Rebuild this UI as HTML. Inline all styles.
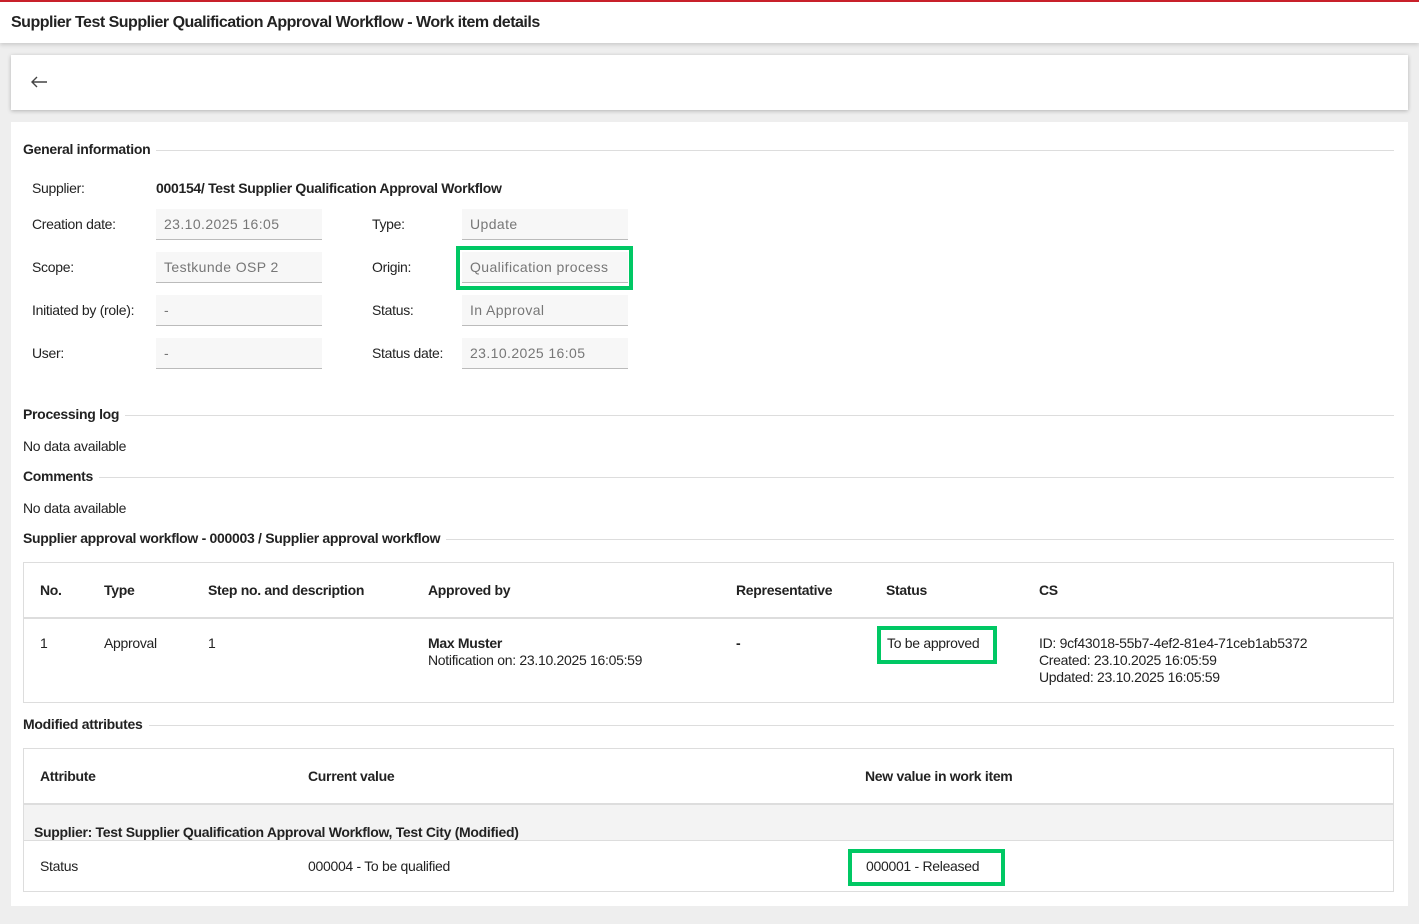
<!DOCTYPE html>
<html><head><meta charset="utf-8"><style>
*{margin:0;padding:0;box-sizing:border-box}
body{width:1419px;height:924px;background:#eeeeee;font-family:"Liberation Sans",sans-serif;font-size:14px;color:#222;position:relative;overflow:hidden;letter-spacing:-0.3px}
.a{position:absolute;white-space:nowrap}
.b{font-weight:bold}
.hdr{position:absolute;left:0;top:0;width:1419px;height:43px;background:#fff;border-top:2px solid #c8202a;box-shadow:0 2px 4px rgba(0,0,0,.15)}
.card{position:absolute;left:11px;top:55px;width:1397px;height:55px;background:#fff;box-shadow:0 1px 4px rgba(0,0,0,.25)}
.panel{position:absolute;left:11px;top:122px;width:1397px;height:784px;background:#fff}
.sec{position:absolute;left:23px;height:1px;background:#ddd;width:1371px}
.sec span{position:absolute;left:0;top:-9px;background:#fff;padding-right:6px;font-weight:bold;font-size:14px}
.inp{position:absolute;width:166px;height:31px;background:#f7f7f7;border-bottom:1px solid #bbb;color:#777;padding:7px 8px;font-size:14px;letter-spacing:0.4px}
.tbl{position:absolute;left:23px;width:1371px;border:1px solid #ddd;background:#fff}
.grn{position:absolute;border:4px solid #00c864}
</style></head><body>
<div class="hdr"><div class="a b" style="left:11px;top:12px;font-size:16px;letter-spacing:-0.5px">Supplier Test Supplier Qualification Approval Workflow - Work item details</div></div>
<div class="card"><svg class="a" style="left:19px;top:20px" width="18" height="14" viewBox="0 0 18 14"><path d="M17 7H2M7 2L2 7l5 5" fill="none" stroke="#444" stroke-width="1.4"/></svg></div>
<div class="panel"></div>
<div class="sec" style="top:150px"><span>General information</span></div>
<div class="a" style="left:32px;top:180px">Supplier:</div>
<div class="a b" style="left:156px;top:180px">000154/ Test Supplier Qualification Approval Workflow</div>
<div class="a" style="left:32px;top:216px">Creation date:</div>
<div class="a" style="left:32px;top:259px">Scope:</div>
<div class="a" style="left:32px;top:302px">Initiated by (role):</div>
<div class="a" style="left:32px;top:345px">User:</div>
<div class="inp" style="left:156px;top:209px">23.10.2025 16:05</div>
<div class="inp" style="left:156px;top:252px">Testkunde OSP 2</div>
<div class="inp" style="left:156px;top:295px">-</div>
<div class="inp" style="left:156px;top:338px">-</div>
<div class="a" style="left:372px;top:216px">Type:</div>
<div class="a" style="left:372px;top:259px">Origin:</div>
<div class="a" style="left:372px;top:302px">Status:</div>
<div class="a" style="left:372px;top:345px">Status date:</div>
<div class="inp" style="left:462px;top:209px">Update</div>
<div class="inp" style="left:462px;top:252px">Qualification process</div>
<div class="inp" style="left:462px;top:295px">In Approval</div>
<div class="inp" style="left:462px;top:338px">23.10.2025 16:05</div>
<div class="grn" style="left:456px;top:246px;width:177px;height:44px"></div>
<div class="sec" style="top:415px"><span>Processing log</span></div>
<div class="a" style="left:23px;top:438px">No data available</div>
<div class="sec" style="top:477px"><span>Comments</span></div>
<div class="a" style="left:23px;top:500px">No data available</div>
<div class="sec" style="top:539px"><span>Supplier approval workflow - 000003 / Supplier approval workflow</span></div>
<div class="tbl" style="top:562px;height:141px"><div style="position:absolute;left:0;top:54px;width:100%;height:2px;background:#ddd"></div></div>
<div class="a b" style="left:40px;top:582px">No.</div>
<div class="a b" style="left:104px;top:582px">Type</div>
<div class="a b" style="left:208px;top:582px">Step no. and description</div>
<div class="a b" style="left:428px;top:582px">Approved by</div>
<div class="a b" style="left:736px;top:582px">Representative</div>
<div class="a b" style="left:886px;top:582px">Status</div>
<div class="a b" style="left:1039px;top:582px">CS</div>
<div class="a" style="left:40px;top:635px">1</div>
<div class="a" style="left:104px;top:635px">Approval</div>
<div class="a" style="left:208px;top:635px">1</div>
<div class="a b" style="left:428px;top:635px">Max Muster</div>
<div class="a" style="left:428px;top:652px">Notification on: 23.10.2025 16:05:59</div>
<div class="a b" style="left:736px;top:635px">-</div>
<div class="a" style="left:887px;top:635px">To be approved</div>
<div class="grn" style="left:877px;top:626px;width:120px;height:38px"></div>
<div class="a" style="left:1039px;top:635px;line-height:17px">ID: 9cf43018-55b7-4ef2-81e4-71ceb1ab5372<br>Created: 23.10.2025 16:05:59<br>Updated: 23.10.2025 16:05:59</div>
<div class="sec" style="top:725px"><span>Modified attributes</span></div>
<div class="tbl" style="top:748px;height:144px">
<div style="position:absolute;left:0;top:54px;width:100%;height:2px;background:#ddd"></div>
<div style="position:absolute;left:0;top:56px;width:100%;height:36px;background:#f3f3f3;border-bottom:1px solid #ddd"></div></div>
<div class="a b" style="left:40px;top:768px">Attribute</div>
<div class="a b" style="left:308px;top:768px">Current value</div>
<div class="a b" style="left:865px;top:768px">New value in work item</div>
<div class="a b" style="left:34px;top:824px">Supplier: Test Supplier Qualification Approval Workflow, Test City (Modified)</div>
<div class="a" style="left:40px;top:858px">Status</div>
<div class="a" style="left:308px;top:858px">000004 - To be qualified</div>
<div class="a" style="left:866px;top:858px">000001 - Released</div>
<div class="grn" style="left:848px;top:849px;width:157px;height:37px"></div>
</body></html>
